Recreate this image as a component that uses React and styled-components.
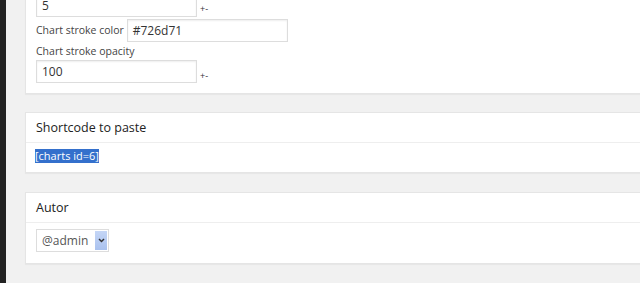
import React from 'react';
import styled, { createGlobalStyle } from 'styled-components';

const GlobalStyle = createGlobalStyle`
  html, body {
    margin: 0;
    padding: 0;
    background: #f1f1f1;
    font-family: "Open Sans", "Liberation Sans", sans-serif;
    color: #444;
  }
`;

const Page = styled.div`
  display: flex;
  width: 640px;
  height: 283px;
  overflow: hidden;
`;

const Sidebar = styled.div`
  flex: 0 0 6px;
  background: #222;
`;

const Content = styled.div`
  flex: 1;
  padding-left: 19px;
  overflow: hidden;
`;

const Postbox = styled.div`
  width: 800px;
  background: #fff;
  border: 1px solid #e5e5e5;
  box-shadow: 0 1px 1px rgba(0, 0, 0, 0.04);
  margin-top: ${(p) => p.$top || 0}px;
  margin-bottom: ${(p) => p.$gap || 18}px;
`;

const Heading = styled.h3`
  margin: 0;
  height: 29px;
  padding: 0 10px;
  display: flex;
  align-items: center;
  font-size: 12.5px;
  font-weight: 400;
  color: #222;
  border-bottom: 1px solid #eee;
`;

const Inside = styled.div`
  display: flex;
  flex-direction: column;
  align-items: flex-start;
  padding: ${(p) => p.$pad || '6px 10px 10px'};
`;

const Row = styled.div`
  display: flex;
  align-items: center;
  gap: 3px;
  margin-top: ${(p) => p.$mt || 0}px;
`;

const Label = styled.span`
  font-size: 10.5px;
  color: #444;
  margin-top: ${(p) => p.$mt || 0}px;
  line-height: 15px;
`;

const Input = styled.div`
  box-sizing: border-box;
  width: 161px;
  height: ${(p) => p.$h || 23}px;
  border: 1px solid #ddd;
  box-shadow: inset 0 1px 2px rgba(0, 0, 0, 0.07);
  background: #fff;
  padding-left: 5px;
  display: flex;
  align-items: center;
  font-size: 12px;
  color: #333;
`;

const PlusMinus = styled.span`
  font-size: 9px;
  color: #333;
  align-self: flex-start;
  margin-top: 9px;
`;

const Selected = styled.span`
  background: #3470cc;
  color: #fff;
  font-size: 11px;
  line-height: 14px;
`;

const Select = styled.div`
  box-sizing: border-box;
  height: 23px;
  display: flex;
  align-items: stretch;
  border: 1px solid #ddd;
  background: #fff;
`;

const SelectValue = styled.span`
  display: flex;
  align-items: center;
  padding: 0 7px 0 5px;
  font-size: 12px;
  color: #555;
`;

const SelectArrow = styled.span`
  width: 12px;
  margin: 1px 1px 1px 0;
  display: flex;
  align-items: center;
  justify-content: center;
  background: linear-gradient(#c5d6f6, #a9c1ee);
`;

export default function App() {
  return (
    <>
      <GlobalStyle />
      <Page>
        <Sidebar />
        <Content>
          <Postbox $top={-20} $gap={18}>
            <Inside $pad="12px 10px 10px">
              <Row>
                <Input $h={24}>5</Input>
                <PlusMinus>+-</PlusMinus>
              </Row>
              <Row $mt={2}>
                <Label>Chart stroke color</Label>
                <Input>#726d71</Input>
              </Row>
              <Label $mt={2}>Chart stroke opacity</Label>
              <Row $mt={1}>
                <Input>100</Input>
                <PlusMinus>+-</PlusMinus>
              </Row>
            </Inside>
          </Postbox>

          <Postbox $gap={19}>
            <Heading>Shortcode to paste</Heading>
            <Inside $pad="6px 10px 9px 9px">
              <Selected>[charts id=6]</Selected>
            </Inside>
          </Postbox>

          <Postbox>
            <Heading>Autor</Heading>
            <Inside $pad="6px 10px 11px">
              <Select>
                <SelectValue>@admin</SelectValue>
                <SelectArrow>
                  <svg width="7" height="5" viewBox="0 0 7 5">
                    <path d="M1 1 L3.5 3.5 L6 1" fill="none" stroke="#333" strokeWidth="1.5" />
                  </svg>
                </SelectArrow>
              </Select>
            </Inside>
          </Postbox>
        </Content>
      </Page>
    </>
  );
}
